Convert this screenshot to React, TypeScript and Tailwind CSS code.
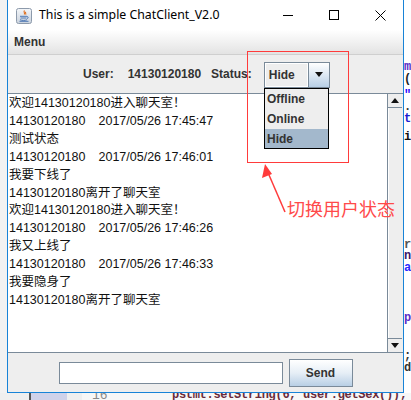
import React from "react";

const ui = { fontFamily: '"Liberation Sans", Arial, sans-serif' };
const cjk = { fontFamily: '"Liberation Sans", Arial, "Noto Sans CJK SC", sans-serif' };
const title = { fontFamily: '"Noto Sans", "Open Sans", sans-serif' };
const mono = { fontFamily: '"Liberation Mono", "DejaVu Sans Mono", monospace' };

const lines: { kind: "msg" | "ts"; text: string; time?: string }[] = [
  { kind: "msg", text: "欢迎14130120180进入聊天室！" },
  { kind: "ts", text: "14130120180", time: "2017/05/26 17:45:47" },
  { kind: "msg", text: "测试状态" },
  { kind: "ts", text: "14130120180", time: "2017/05/26 17:46:01" },
  { kind: "msg", text: "我要下线了" },
  { kind: "msg", text: "14130120180离开了聊天室" },
  { kind: "msg", text: "欢迎14130120180进入聊天室！" },
  { kind: "ts", text: "14130120180", time: "2017/05/26 17:46:26" },
  { kind: "msg", text: "我又上线了" },
  { kind: "ts", text: "14130120180", time: "2017/05/26 17:46:33" },
  { kind: "msg", text: "我要隐身了" },
  { kind: "msg", text: "14130120180离开了聊天室" },
];

function JavaIcon() {
  return (
    <svg width="16" height="16" viewBox="0 0 16 16">
      <defs>
        <linearGradient id="jg" x1="0" y1="0" x2="0" y2="1">
          <stop offset="0" stopColor="#f4f6f9" />
          <stop offset="1" stopColor="#c9d2dd" />
        </linearGradient>
      </defs>
      <rect x="0.5" y="0.5" width="15" height="15" rx="2" fill="url(#jg)" stroke="#8d9aab" />
      <path d="M8.5 2.5c-1.5 1.5 1 2.3-0.3 4M9.8 3.8c-1 1 0.6 1.6-0.2 2.8" stroke="#e07020" strokeWidth="1.1" fill="none" />
      <path d="M4 8.3h7M4.5 10h6M4 11.7c2 1 5 1 7 0M11 8.5c1.5 0 1.5 2 0 2" stroke="#4f79b5" strokeWidth="1" fill="none" />
      <path d="M3.5 13.3h9" stroke="#4f79b5" strokeWidth="1" />
    </svg>
  );
}

function Tri({ up }: { up?: boolean }) {
  return (
    <svg width="8" height="5" viewBox="0 0 8 5">
      <path d={up ? "M0 5L4 0L8 5Z" : "M0 0L8 0L4 5Z"} fill="#111" />
    </svg>
  );
}

const codeBits: { top: number; text: string; color: string }[] = [
  { top: 62, text: "me", color: "#5a2fc8" },
  { top: 74, text: "(", color: "#222" },
  { top: 90, text: "\"", color: "#2a00ff" },
  { top: 102, text: ".", color: "#333" },
  { top: 114, text: "tr", color: "#1c1cd0" },
  { top: 132, text: "ir", color: "#111" },
  { top: 240, text: "r;", color: "#555" },
  { top: 251, text: "n", color: "#3b1a6a" },
  { top: 263, text: "a.", color: "#2a2aff" },
  { top: 313, text: "pa", color: "#5a2fc8" },
  { top: 351, text: ";", color: "#333" },
  { top: 363, text: "d", color: "#333" },
];

export default function App() {
  return (
    <div className="relative w-[411px] h-[400px] overflow-hidden bg-[#f2f2f2]">
      {/* background code editor (right strip) */}
      <div className="absolute left-[404px] top-0 w-[7px] h-[400px] bg-white overflow-hidden text-[12px] font-bold leading-[11px]" style={mono}>
        {codeBits.map((b, i) => (
          <span key={i} className="absolute left-0 whitespace-nowrap" style={{ top: b.top, color: b.color }}>
            {b.text}
          </span>
        ))}
      </div>
      {/* background code editor (bottom strip) */}
      <div className="absolute left-0 top-[393px] w-[411px] h-[7px] flex overflow-hidden">
        <div className="w-[29px] bg-[#efefef]" />
        <div className="w-[2px] bg-[#555]" />
        <div className="w-[36px] bg-[#cfd2ea]" />
        <div className="w-[15px] bg-[#efefef]" />
        <div className="relative flex-1 bg-[#f7f7f7]">
          <span className="absolute left-[10px] top-[-4px] text-[13px] text-[#888] leading-[13px]" style={mono}>16</span>
          <span className="absolute left-[90px] top-[-4px] text-[12px] font-bold text-[#6a2a3a] leading-[13px] whitespace-nowrap tracking-[-0.3px]" style={mono}>pstmt.setString(6, user.getSex());</span>
        </div>
      </div>

      {/* window */}
      <div className="absolute left-[7px] top-0 w-[397px] h-[393px] border-x border-b border-[#1883d7] bg-[#eeeeee] flex flex-col">
        {/* title bar */}
        <div className="h-[30px] bg-white flex items-center shrink-0">
          <div className="ml-[8px] mt-[1px]"><JavaIcon /></div>
          <span className="ml-[7px] text-[12.3px] text-black" style={title}>This is a simple ChatClient_V2.0</span>
          <div className="ml-auto flex items-center h-full">
            <div className="w-[46px] h-full flex items-center justify-center">
              <div className="w-[10px] h-[1px] bg-black" />
            </div>
            <div className="w-[46px] h-full flex items-center justify-center">
              <div className="w-[10px] h-[10px] border border-black" />
            </div>
            <div className="w-[46px] h-full flex items-center justify-center">
              <svg width="11" height="11" viewBox="0 0 11 11"><path d="M0.5 0.5L10.5 10.5M10.5 0.5L0.5 10.5" stroke="#000" strokeWidth="1" /></svg>
            </div>
          </div>
        </div>
        {/* menu bar */}
        <div className="h-[25px] shrink-0 bg-gradient-to-b from-white to-[#e3e3e3] border-b border-[#cfcfcf] flex items-center pl-[6px]">
          <span className="text-[12px] font-bold text-[#333]" style={ui}>Menu</span>
        </div>
        {/* user row */}
        <div className="h-[38px] shrink-0 flex items-center text-[12px] font-bold text-[#333]" style={ui}>
          <span className="ml-[75px]">User:</span>
          <span className="ml-[14px]">14130120180</span>
          <span className="ml-[10px]">Status:</span>
          <div className="ml-[12px] w-[66px] h-[26px] flex border border-[#7a8a99] mt-[1px]">
            <div className="flex-1 flex items-center pl-[3px] bg-[#eeeeee] border border-white">Hide</div>
            <div className="w-[21px] border-l border-[#7a8a99] bg-gradient-to-b from-white via-[#dde8f3] to-[#b8cfe5] flex items-center justify-center">
              <Tri />
            </div>
          </div>
        </div>
        {/* chat area */}
        <div className="h-[260px] shrink-0 border-y border-[#7a8a99] flex pr-[1px]">
          <div className="flex-1 bg-white pl-[1px] pt-[1px] text-[12.5px] leading-[17.9px] text-[#111]" style={cjk}>
            {lines.map((l, i) =>
              l.kind === "msg" ? (
                <div key={i} className="whitespace-nowrap">{l.text}</div>
              ) : (
                <div key={i} className="whitespace-nowrap">
                  {l.text}
                  <span className="ml-[13px]">{l.time}</span>
                </div>
              )
            )}
          </div>
          <div className="w-[15px] flex flex-col border-l border-[#7a8a99] bg-[#eeeeee]">
            <div className="h-[14px] border-b border-[#7a8a99] flex items-center justify-center bg-[#eeeeee]">
              <Tri up />
            </div>
            <div className="flex-1 border-l border-white" />
            <div className="h-[14px] border-t border-[#7a8a99] flex items-center justify-center bg-[#eeeeee]">
              <Tri />
            </div>
          </div>
        </div>
        {/* bottom row */}
        <div className="flex-1 flex items-center justify-center">
          <div className="w-[224px] h-[22px] bg-white border border-[#7a8a99]" />
          <button className="ml-[6px] w-[64px] h-[28px] border border-[#7a8a99] bg-gradient-to-b from-white via-[#e6eef6] to-[#b8cfe5] text-[12px] font-bold text-[#333]" style={ui}>
            Send
          </button>
        </div>
      </div>

      {/* dropdown popup */}
      <div className="absolute left-[264px] top-[88px] w-[65px] h-[61px] border border-black bg-[#eeeeee] flex flex-col text-[12px] font-bold text-[#333]" style={ui}>
        <div className="h-[20px] flex items-center pl-[2px]">Offline</div>
        <div className="h-[20px] flex items-center pl-[2px]">Online</div>
        <div className="h-[19px] flex items-center pl-[2px] bg-[#a3b8cc]">Hide</div>
      </div>

      {/* annotation */}
      <div className="absolute left-[247px] top-[51px] w-[102px] h-[112px] border border-[#ff3b3b]" />
      <svg className="absolute left-0 top-0" width="411" height="400" viewBox="0 0 411 400">
        <path d="M285 212L266 168" stroke="#ff3b3b" strokeWidth="1.5" />
        <path d="M265 164L262 178L272 174Z" fill="#ff3b3b" />
      </svg>
      <div className="absolute left-[287px] top-[197px] text-[18px] leading-[22px] text-[#ff4a4a]" style={{ fontFamily: '"Noto Sans CJK SC", sans-serif' }}>
        切换用户状态
      </div>
    </div>
  );
}
